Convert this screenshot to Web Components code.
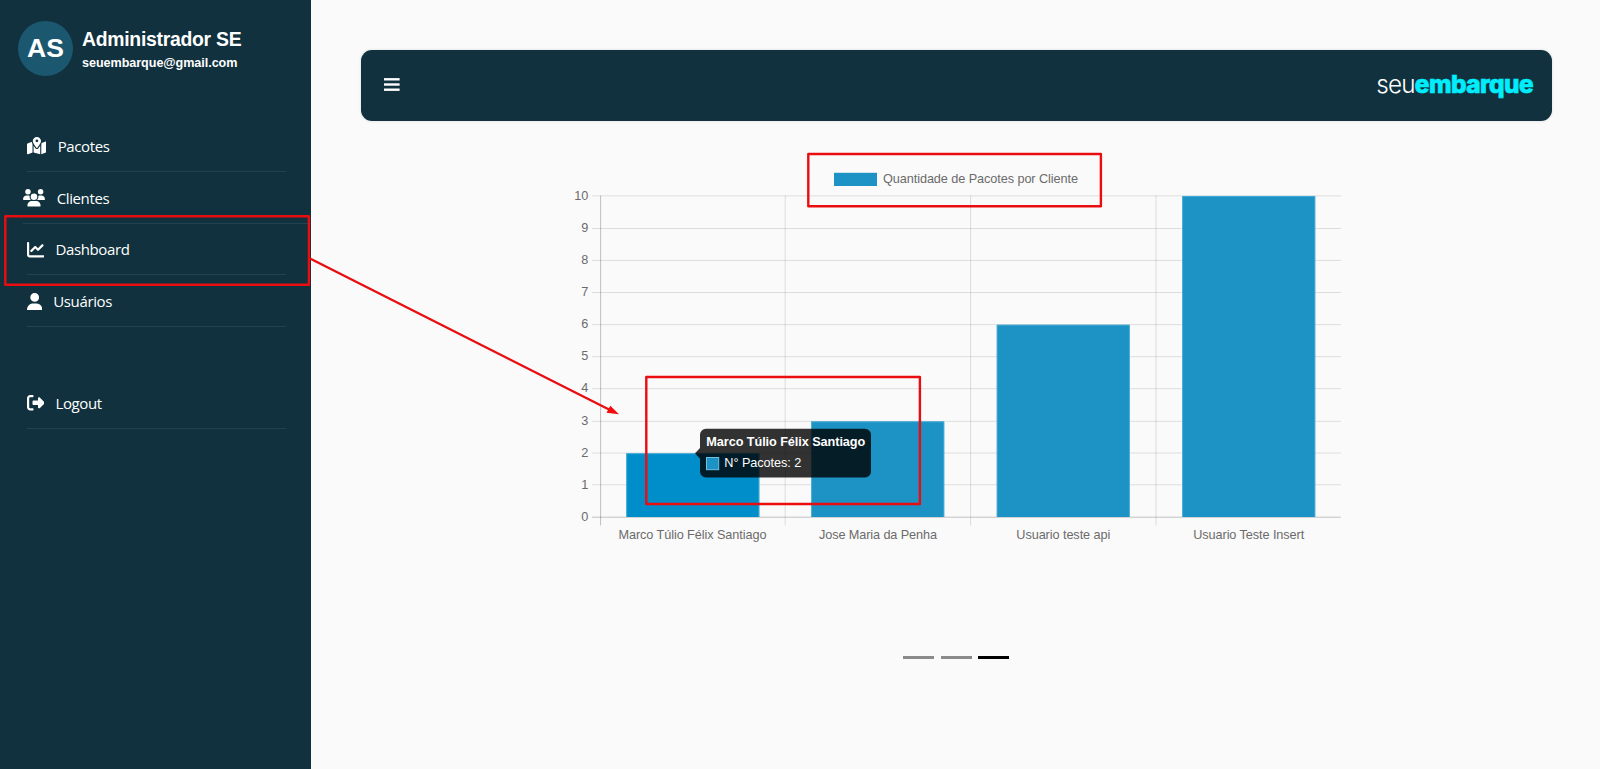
<!DOCTYPE html>
<html lang="pt-BR">
<head>
<meta charset="utf-8">
<title>Seu Embarque - Dashboard</title>
<style>
html,body{margin:0;height:100%;overflow:hidden;background:#fafafa;font-family:"Liberation Sans",Arial,sans-serif}
</style>
</head>
<body>
<se-app></se-app>
<script>
const define = (name, html, setup) => {
  const tpl = document.createElement('template');
  tpl.innerHTML = html;
  customElements.define(name, class extends HTMLElement {
    connectedCallback() {
      if (this.shadowRoot) return;
      const root = this.attachShadow({mode: 'open'});
      root.append(tpl.content.cloneNode(true));
      if (setup) setup(this, root);
    }
  });
};

const icons = {
  map: [576, 'M408 120c0 54.6-73.1 151.9-105.2 192c-7.7 9.6-22 9.6-29.6 0C241.1 271.9 168 174.6 168 120C168 53.7 221.7 0 288 0s120 53.7 120 120zm8 80.4c3.5-6.9 6.7-13.8 9.6-20.6c.5-1.2 1-2.5 1.5-3.7l116-46.4C558.9 123.4 576 135 576 152V422.8c0 9.8-6 18.6-15.1 22.3L416 503V200.4zM137.6 138.3c2.4 14.1 7.2 28.3 12.8 41.5c2.9 6.8 6.1 13.7 9.6 20.6V451.8L32.9 502.7C17.1 509 0 497.4 0 480.4V209.6c0-9.8 6-18.6 15.1-22.3l122.6-49zM327.8 332c13.9-17.4 35.7-45.7 56.2-77V504.3L192 449.4V255c20.5 31.3 42.3 59.6 56.2 77c20.5 25.6 59.1 25.6 79.6 0zM288 152a40 40 0 1 0 0-80 40 40 0 1 0 0 80z'],
  users: [640, 'M144 0a80 80 0 1 1 0 160A80 80 0 1 1 144 0zM512 0a80 80 0 1 1 0 160A80 80 0 1 1 512 0zM0 298.7C0 239.8 47.8 192 106.7 192h42.7c15.9 0 31 3.5 44.6 9.7c-1.3 7.2-1.9 14.7-1.9 22.3c0 38.2 16.8 72.5 43.3 96c-.2 0-.4 0-.7 0H21.3C9.6 320 0 310.4 0 298.7zM405.3 320c-.2 0-.4 0-.7 0c26.6-23.5 43.3-57.8 43.3-96c0-7.6-.7-15-1.9-22.3c13.6-6.3 28.7-9.7 44.6-9.7h42.7C592.2 192 640 239.8 640 298.7c0 11.8-9.6 21.3-21.3 21.3H405.3zM224 224a96 96 0 1 1 192 0 96 96 0 1 1 -192 0zM128 485.3C128 411.7 187.7 352 261.3 352H378.7C452.3 352 512 411.7 512 485.3c0 14.7-11.9 26.7-26.7 26.7H154.7c-14.7 0-26.7-11.9-26.7-26.7z'],
  chart: [512, 'M64 64c0-17.7-14.3-32-32-32S0 46.3 0 64V400c0 44.2 35.8 80 80 80H480c17.7 0 32-14.3 32-32s-14.3-32-32-32H80c-8.8 0-16-7.2-16-16V64zm406.6 86.6c12.5-12.5 12.5-32.8 0-45.3s-32.8-12.5-45.3 0L320 210.7l-57.4-57.4c-12.5-12.5-32.8-12.5-45.3 0l-112 112c-12.5 12.5-12.5 32.8 0 45.3s32.8 12.5 45.3 0L240 221.3l57.4 57.4c12.5 12.5 32.8 12.5 45.3 0l128-128z'],
  user: [448, 'M224 256A128 128 0 1 0 224 0a128 128 0 1 0 0 256zm-45.7 48C79.8 304 0 383.8 0 482.3C0 498.7 13.3 512 29.7 512H418.3c16.4 0 29.7-13.3 29.7-29.7C448 383.8 368.2 304 269.7 304H178.3z'],
  logout: [512, 'M377.9 105.9L500.7 228.7c7.2 7.2 11.3 17.1 11.3 27.3s-4.1 20.1-11.3 27.3L377.9 406.1c-6.4 6.4-15 9.9-24 9.9c-18.7 0-33.9-15.2-33.9-33.9l0-62.1-128 0c-17.7 0-32-14.3-32-32l0-64c0-17.7 14.3-32 32-32l128 0 0-62.1c0-18.7 15.2-33.9 33.9-33.9c9 0 17.6 3.6 24 9.9zM160 96L96 96c-17.7 0-32 14.3-32 32l0 256c0 17.7 14.3 32 32 32l64 0c17.7 0 32 14.3 32 32s-14.3 32-32 32l-64 0c-53 0-96-43-96-96L0 128C0 75 43 32 96 32l64 0c17.7 0 32 14.3 32 32s-14.3 32-32 32z']
};

define('se-icon', `<style>:host{display:block;flex:none;line-height:0}svg{display:block;height:17.6px;fill:#fff}</style><svg><path/></svg>`, (el, root) => {
  const [w, d] = icons[el.getAttribute('name')];
  const svg = root.querySelector('svg');
  svg.setAttribute('viewBox', `0 0 ${w} 512`);
  svg.style.width = w * 17.6 / 512 + 'px';
  root.querySelector('path').setAttribute('d', d);
});

define('se-nav-item', `<style>
:host{display:block;box-sizing:border-box;height:51.8px;padding:0 25px 0 26.5px}
:host([active]){padding:0 0 0 23.3px}
div{box-sizing:border-box;height:100%;display:flex;align-items:flex-start;padding-top:17.3px;gap:11.4px;border-bottom:1px solid #21424e}
span{font:15px/20px "Open Sans","Noto Sans",sans-serif;color:#fff;letter-spacing:-.38px;white-space:nowrap;margin-top:-1.5px}
</style><div><span><slot></slot></span></div>`, (el, root) => {
  const icon = document.createElement('se-icon');
  icon.setAttribute('name', el.getAttribute('icon'));
  root.querySelector('div').prepend(icon);
});

define('se-profile', `<style>
:host{display:flex;gap:8px;padding:21px 0 0 18px;height:99px;box-sizing:border-box;color:#fff}
.a{width:55px;height:55px;border-radius:50%;background:#1b5870;display:flex;align-items:center;justify-content:center;font:bold 26.5px/1 "Liberation Sans",Arial,sans-serif;flex:none}
.t{display:flex;flex-direction:column;font-weight:bold;padding:6px 0 0 1px}
.n{font-size:19.4px;line-height:24px;white-space:nowrap;letter-spacing:-.28px}
.e{font-size:12.6px;line-height:16px;margin-top:4px;white-space:nowrap;letter-spacing:-.05px}
</style><div class="a">AS</div><div class="t"><span class="n"><slot name="name"></slot></span><span class="e"><slot name="mail"></slot></span></div>`);

define('se-sidebar', `<style>
:host{display:block;width:311px;height:100%;background:#10313d;flex:none}
nav{padding-top:21px}
.gap{height:50px}
</style><se-profile><span slot="name">Administrador SE</span><span slot="mail">seuembarque@gmail.com</span></se-profile>
<nav><se-nav-item icon="map">Pacotes</se-nav-item><se-nav-item icon="users" active>Clientes</se-nav-item><se-nav-item icon="chart">Dashboard</se-nav-item><se-nav-item icon="user">Usuários</se-nav-item><div class="gap"></div><se-nav-item icon="logout">Logout</se-nav-item></nav>`);

define('se-header', `<style>
:host{display:flex;box-sizing:border-box;height:71px;border-radius:11px;background:#10313d;align-items:center;justify-content:space-between;padding:0 18.5px 0 23px;box-shadow:0 0 3px #0002}
svg{display:block;width:16px;height:15px;margin-bottom:1.5px}
.l{display:flex;font:300 24.3px/30px Inter,sans-serif;color:#fff;padding-bottom:3px}
.s{letter-spacing:-.8px}
b{font-weight:800;color:#00edfc;letter-spacing:-.5px;-webkit-text-stroke:.7px #00edfc}
</style><svg viewBox="0 0 16 15" fill="#fff"><rect y="1.1" width="15.6" height="2.4"/><rect y="6.3" width="15.6" height="2.4"/><rect y="11.5" width="15.6" height="2.4"/></svg><div class="l"><span class="s">seu</span><b>embarque</b></div>`);

define('se-chart', `<style>
:host{display:block}
svg{display:block;width:800px;height:410px}
text{font:12.7px "Liberation Sans",Arial,sans-serif;fill:#6b6b6b}
</style><svg viewBox="560 140 800 410"></svg>`, (el, root) => {
  const rows = [517.2,484.8,453,421.3,388.7,356.7,324.6,292.5,260.4,228.5,195.9];
  let s = '';
  rows.forEach((y, i) => {
    s += `<rect x="592" y="${y - .5}" width="749" height="1" fill="#000" opacity="${i ? .115 : .22}"/>`;
    s += `<text x="588.3" y="${y + 3.7}" text-anchor="end">${i}</text>`;
  });
  [600.6, 785.2, 970.6, 1156].forEach((x, i) => s += `<rect x="${x - .5}" y="195.5" width="1" height="330" fill="#000" opacity="${i ? .12 : .24}"/>`);
  [[626.3,453.3,'#008ecb'],[811.2,421.4,'#1c93c4'],[996.8,324.8,'#1c93c4'],[1182.2,196,'#1c93c4']].forEach(([x, y, c]) =>
    s += `<rect x="${x}" y="${y}" width="133" height="${517 - y}" fill="${c}"/><path d="M${x + .4} 517V${y + .4}H${x + 132.6}V517" fill="none" stroke="#4fb0d8" stroke-width=".8"/>`);
  [['Marco Túlio Félix Santiago',618.5,148],['Jose Maria da Penha',819,118],['Usuario teste api',1016.3,94],['Usuario Teste Insert',1193.2,111]].forEach(([t, x, w]) =>
    s += `<text x="${x}" y="539.2" textLength="${w}">${t}</text>`);
  s += `<rect x="834" y="172.8" width="43" height="13.2" fill="#1c93c4"/><text x="883" y="183" textLength="195">Quantidade de Pacotes por Cliente</text>`;
  s += `<g><path d="M706 428.7H865a6 6 0 0 1 6 6V471.5a6 6 0 0 1-6 6H706a6 6 0 0 1-6-6V458.7L695 453.3L700 448V434.7a6 6 0 0 1 6-6Z" fill="#000" fill-opacity=".8"/>
  <text x="706.3" y="446" textLength="159" style="font-weight:bold;fill:#fff">Marco Túlio Félix Santiago</text>
  <rect x="706.5" y="457.5" width="12.2" height="12.2" fill="#1c93c4" stroke="#70c0e0"/>
  <text x="724.3" y="467" textLength="77" style="fill:#fff">N° Pacotes: 2</text></g>`;
  root.querySelector('svg').innerHTML = s;
});

define('se-indicators', `<style>
:host{display:flex;justify-content:center;gap:6.6px}
i{width:31px;height:3px;background:#8a8a8a}i:last-child{background:#000}
</style><i></i><i></i><i></i>`);

define('se-annotations', `<style>
:host{position:absolute;inset:0;pointer-events:none}svg{display:block;width:1600px;height:769px}
</style><svg viewBox="0 0 1600 769" fill="none" stroke="#e90d10" stroke-width="2.4" stroke-linejoin="round">
<rect x="5.3" y="216.3" width="303.6" height="68.4"/><rect x="808.3" y="154" width="292.6" height="52.2"/><rect x="646.3" y="377" width="273.6" height="127"/>
<path d="M310 258.5L610 410"/><path d="M619 414.3L606.5 412.8L610.3 405.8Z" fill="#f50b0b" stroke="none"/></svg>`);

define('se-app', `<style>
:host{display:flex;position:relative;width:1600px;height:769px;background:#fafafa}
main{flex:1;display:flex;flex-direction:column;padding:50px 48.5px 0 50px}
se-chart{margin:19px 0 0 199px}
se-indicators{margin-top:106px}
</style><se-sidebar></se-sidebar><main><se-header></se-header><se-chart></se-chart><se-indicators></se-indicators></main><se-annotations></se-annotations>`);
</script>
</body>
</html>
